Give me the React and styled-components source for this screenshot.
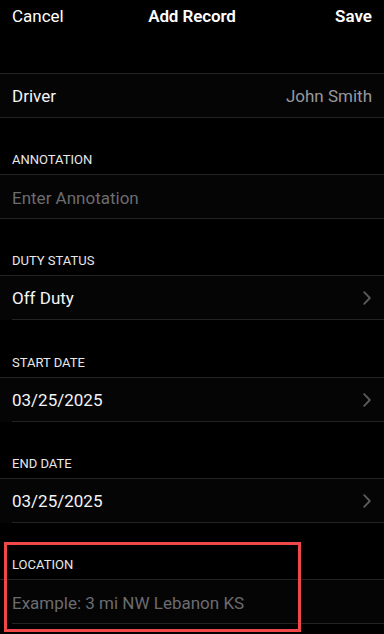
import React from "react";
import styled, { createGlobalStyle } from "styled-components";

const Global = createGlobalStyle`
  html, body { margin: 0; padding: 0; background: #000; }
  body { font-family: Roboto, "Liberation Sans", Arial, sans-serif; -webkit-font-smoothing: antialiased; }
  * { box-sizing: border-box; }
`;

const Screen = styled.div`
  width: 384px;
  height: 634px;
  background: #000;
  color: #fff;
  overflow: hidden;
  display: flex;
  flex-direction: column;
`;

const NavBar = styled.div`
  height: 32px;
  padding: 0 12px;
  display: grid;
  grid-template-columns: 1fr auto 1fr;
  align-items: center;
  font-size: 17px;
  flex-shrink: 0;
`;

const NavButton = styled.span`
  font-weight: ${(p) => (p.$bold ? 600 : 400)};
  justify-self: ${(p) => (p.$right ? "end" : "start")};
  color: #fff;
`;

const Title = styled.span`
  font-weight: 600;
  letter-spacing: -0.1px;
`;

const Spacer = styled.div`
  height: 41px;
  flex-shrink: 0;
`;

const Group = styled.div`
  border-top: 1px solid #232325;
  background: #050505;
  flex-shrink: 0;
`;

const Row = styled.div`
  height: 44px;
  display: flex;
  align-items: center;
  padding: 0 12px;
  font-size: 17px;
  position: relative;
  border-bottom: ${(p) => (p.$inset ? "none" : "1px solid #232325")};
  &::after {
    content: "";
    display: ${(p) => (p.$inset ? "block" : "none")};
    position: absolute;
    left: 12px;
    right: 0;
    bottom: 0;
    height: 1px;
    background: #232325;
  }
`;

const Label = styled.span`
  flex: 1;
  color: ${(p) => (p.$placeholder ? "#6c6c70" : "#f4f4f6")};
  padding-top: ${(p) => (p.$placeholder ? "2px" : "0")};
`;

const Value = styled.span`
  color: #98989d;
`;

const SectionHeader = styled.div`
  height: 56.2px;
  display: flex;
  align-items: flex-end;
  padding: 0 12px 6px;
  font-size: 13px;
  line-height: 16px;
  color: #e8e8ea;
  text-transform: uppercase;
  flex-shrink: 0;
`;

const Highlighted = styled.div`
  position: relative;
`;

const HighlightBox = styled.div`
  position: absolute;
  left: 4px;
  top: 19px;
  width: 297px;
  height: 90px;
  border: 3px solid #f04848;
  pointer-events: none;
`;

const Chevron = () => (
  <svg width="8" height="14" viewBox="0 0 8 14" fill="none">
    <polyline
      points="1.2,1.2 6.8,7 1.2,12.8"
      stroke="#5b5b5f"
      strokeWidth="1.8"
      strokeLinecap="round"
      strokeLinejoin="round"
    />
  </svg>
);

const ChevronWrap = styled.span`
  display: flex;
  align-items: center;
  margin-right: 1px;
`;

function DisclosureSection({ title, value }) {
  return (
    <>
      <SectionHeader>{title}</SectionHeader>
      <Group>
        <Row $inset>
          <Label>{value}</Label>
          <ChevronWrap>
            <Chevron />
          </ChevronWrap>
        </Row>
      </Group>
    </>
  );
}

export default function App() {
  return (
    <>
      <Global />
      <Screen>
        <NavBar>
          <NavButton>Cancel</NavButton>
          <Title>Add Record</Title>
          <NavButton $bold $right>
            Save
          </NavButton>
        </NavBar>
        <Spacer />
        <Group>
          <Row>
            <Label>Driver</Label>
            <Value>John Smith</Value>
          </Row>
        </Group>
        <SectionHeader>Annotation</SectionHeader>
        <Group>
          <Row>
            <Label $placeholder>Enter Annotation</Label>
          </Row>
        </Group>
        <DisclosureSection title="Duty Status" value="Off Duty" />
        <DisclosureSection title="Start Date" value="03/25/2025" />
        <DisclosureSection title="End Date" value="03/25/2025" />
        <Highlighted>
          <SectionHeader>Location</SectionHeader>
          <Group>
            <Row $inset>
              <Label $placeholder>Example: 3 mi NW Lebanon KS</Label>
            </Row>
          </Group>
          <HighlightBox />
        </Highlighted>
      </Screen>
    </>
  );
}
